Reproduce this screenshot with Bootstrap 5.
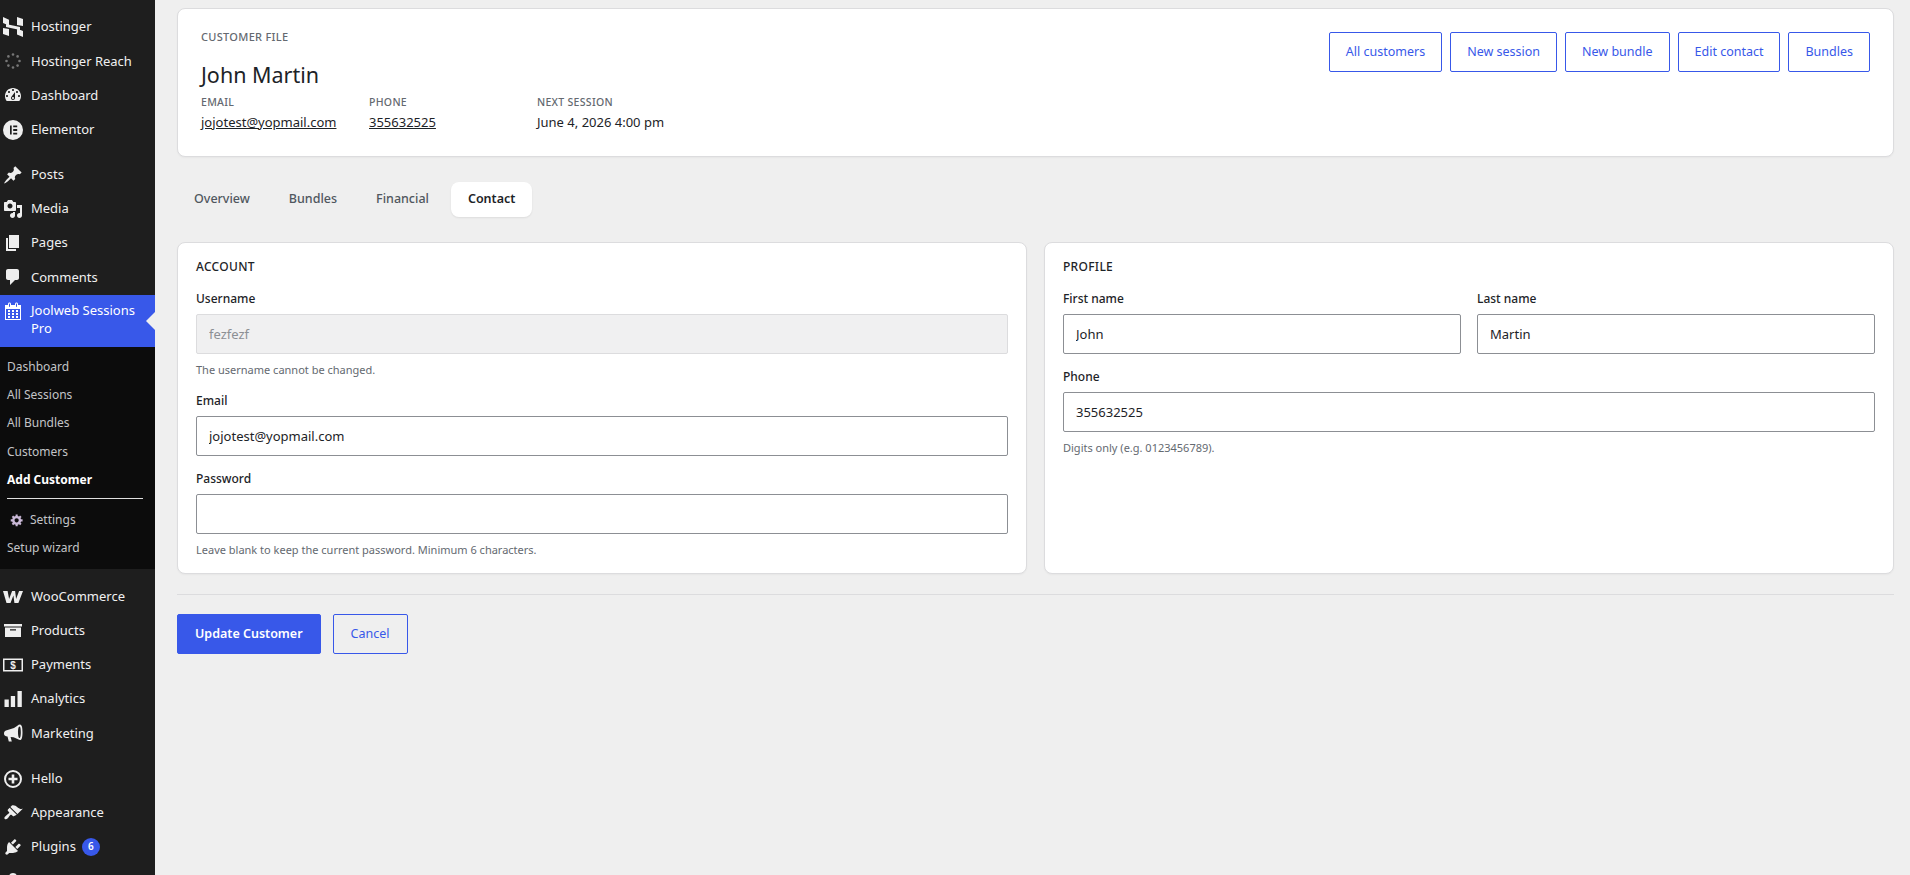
<!DOCTYPE html>
<html lang="en">
<head>
<meta charset="utf-8">
<title>Customer file</title>
<link href="https://cdn.jsdelivr.net/npm/bootstrap@5.3.0/dist/css/bootstrap.min.css" rel="stylesheet">
<style>
html,body{height:100%;overflow:hidden}
body{background:#efefef;font-family:"Noto Sans","Open Sans",sans-serif;font-size:13px;color:#1d2327}
.shell{height:100vh;overflow:hidden}
.wp-side{width:155px;flex:0 0 155px;background:#1e1e1e;padding-top:10px;color:#f0f0f1;overflow:hidden}
.wp-item{height:34.2px;display:flex;align-items:center;padding-left:3px;font-size:13px;color:#f0f0f1;text-decoration:none;white-space:nowrap}
.wp-item svg{width:20px;height:20px;flex:0 0 20px;margin-right:8px;fill:#eee}
.wp-sep{height:11px}
.wp-active{position:relative;background:#3858e9;color:#fff;height:52px;display:flex;align-items:flex-start;padding:6px 0 0 3px;line-height:18px;font-size:13px}
.wp-active svg{width:20px;height:20px;flex:0 0 20px;margin-right:8px;fill:#fff;margin-top:0}
.wp-active::after{content:"";position:absolute;right:0;top:17px;border:9px solid transparent;border-right-color:#efefef;border-left:0}
.wp-sub{height:222px;background:#0c0c0c;padding-top:6.5px}
.wp-sub a{display:flex;align-items:center;height:28.2px;padding-left:7px;color:#c3c4c7;font-size:12px;text-decoration:none;white-space:nowrap}
.wp-sub a.wp-cur{color:#fff;font-weight:700}
.wp-sub .wp-rule{height:1px;background:#e0e0e0;margin:4px 12px 7px 7px}
.wp-gear{width:14px;height:14px;margin:0 6px 0 3px;fill:#c9b8d6}
.wp-count{display:inline-flex;align-items:center;justify-content:center;width:18px;height:18px;border-radius:50%;background:#3858e9;color:#fff;font-size:10px;font-weight:600;margin-left:6px}
.page-main{flex:1 1 auto;min-width:0;padding:8px 16px 0 22px}
.box{border:1px solid #dcdcde;border-radius:8px;background:#fff;box-shadow:0 1px 2px rgba(0,0,0,.04)}
.head-box{height:149px;padding:19px 23px}
.eyebrow{font-size:11px;line-height:18px;letter-spacing:.3px;color:#646970;font-weight:500;text-transform:uppercase}
.cust-name{font-size:21.5px;line-height:32px;margin:13px 0 3px;color:#1d2327;font-weight:400}
.stat-grid{display:grid;grid-template-columns:168px 168px 168px}
.stat-lab{font-size:10.5px;line-height:16px;letter-spacing:.3px;color:#646970;font-weight:500;text-transform:uppercase;margin-bottom:2px}
.stat-val{font-size:13px;line-height:20px;color:#1d2327}
.stat-val a{color:#1d2327}
.act-btn{height:40px;padding:0 16px;border-radius:2px;font-size:12.5px;display:inline-flex;align-items:center;--bs-btn-color:#3858e9;--bs-btn-border-color:#3858e9;--bs-btn-hover-bg:#3858e9;--bs-btn-hover-border-color:#3858e9;--bs-btn-active-bg:#3858e9;--bs-btn-active-border-color:#3858e9;background:#fff}
.tabs-row{margin:25px 0;gap:5px}
.tab-lnk{height:35px;display:flex;align-items:center;padding:0 17px;font-size:12.5px;font-weight:500;color:#50575e;border-radius:8px;text-decoration:none}
.tab-lnk.tab-on{background:#fff;color:#1d2327;font-weight:600;box-shadow:0 1px 2px rgba(0,0,0,.08)}
.pane-row{--bs-gutter-x:17px;--bs-gutter-y:0}
.pane{height:332px;padding:15px 18px 15px 18px}
.pane-title{font-size:12px;line-height:18px;letter-spacing:.3px;font-weight:500;text-transform:uppercase;margin-bottom:14px;color:#1d2327}
.fld{margin-bottom:14px}
.fld label{display:block;font-size:12px;line-height:18px;font-weight:500;margin-bottom:6px;color:#1d2327}
.fld .form-control{height:40px;border:1px solid #8c8f94;border-radius:2px;padding:0 12px;font-size:13px;color:#1d2327;background:#fff}
.fld .form-control:disabled{background:#f0f0f1;border-color:#dcdcde;color:#8c8f94}
.fld-help{font-size:11px;line-height:16px;margin-top:8px;color:#646970}
.pane-gap{--bs-gutter-x:16px}
.sep-line{height:1px;background:#dcdcde;margin:20px 0 19px}
.btn-save,.btn-cancel{height:40px;display:inline-flex;align-items:center;border-radius:2px;font-size:12.5px;padding:0 17px}
.btn-save{--bs-btn-bg:#3858e9;--bs-btn-border-color:#3858e9;--bs-btn-color:#fff;--bs-btn-hover-bg:#3858e9;--bs-btn-hover-color:#fff;font-weight:600}
.btn-cancel{--bs-btn-color:#3858e9;--bs-btn-border-color:#3858e9;--bs-btn-hover-bg:#3858e9}
</style>
</head>
<body>
<div class="shell d-flex">
<nav class="wp-side">
<a class="wp-item" href="#"><svg viewBox="0 0 20 20"><path d="M0 0l6 2.7v5.8L0 6zM14 0l6 2v7l-6-1zM0 11l6 1v7l-6-2zM14 11.5l6 2.5v6l-6-2.5zM3 7l14 3v3L3 10z"/></svg>Hostinger</a>
<a class="wp-item" href="#"><svg viewBox="0 0 20 20"><g fill="#777"><circle cx="10" cy="3.5" r="1.3"/><circle cx="14.6" cy="5.4" r="1.3"/><circle cx="16.5" cy="10" r="1.3"/><circle cx="14.6" cy="14.6" r="1.3"/><circle cx="10" cy="16.5" r="1.3"/><circle cx="5.4" cy="14.6" r="1.3"/><circle cx="3.5" cy="10" r="1.3"/><circle cx="5.4" cy="5.4" r="1.3"/></g></svg>Hostinger Reach</a>
<a class="wp-item" href="#"><svg viewBox="0 0 20 20"><path d="M3.76 16h12.48c1.1-1.37 1.76-3.11 1.76-5 0-4.42-3.58-8-8-8s-8 3.58-8 8c0 1.89.66 3.63 1.76 5zM10 4c.55 0 1 .45 1 1s-.45 1-1 1-1-.45-1-1 .45-1 1-1zM6 6c.55 0 1 .45 1 1s-.45 1-1 1-1-.45-1-1 .45-1 1-1zm8 0c.55 0 1 .45 1 1s-.45 1-1 1-1-.45-1-1 .45-1 1-1zm-5.37 5.55L12 7v6c0 1.1-.9 2-2 2s-2-.9-2-2c0-.57.24-1.08.63-1.45zM4 10c.55 0 1 .45 1 1s-.45 1-1 1-1-.45-1-1 .45-1 1-1zm12 0c.55 0 1 .45 1 1s-.45 1-1 1-1-.45-1-1 .45-1 1-1zm-5 3c0-.55-.45-1-1-1s-1 .45-1 1 .45 1 1 1 1-.45 1-1z"/></svg>Dashboard</a>
<a class="wp-item" href="#"><svg viewBox="0 0 20 20"><path fill-rule="evenodd" d="M10 0a10 10 0 100 20 10 10 0 000-20zM7 5.5h1.7v9H7zM10.2 5.5h4v1.7h-4zM10.2 9.1h4v1.8h-4zM10.2 12.8h4v1.7h-4z"/></svg>Elementor</a>
<div class="wp-sep"></div>
<a class="wp-item" href="#"><svg viewBox="0 0 20 20"><path d="M10.44 3.02l1.82-1.82 6.36 6.35-1.83 1.82c-1.05-.68-2.48-.57-3.41.36l-.75.75c-.92.93-1.04 2.35-.35 3.41l-1.83 1.82-2.41-2.41-2.8 2.79c-.42.42-3.38 2.71-3.8 2.29s1.86-3.39 2.28-3.81l2.79-2.79L4.1 9.36l1.83-1.82c1.05.69 2.48.57 3.4-.36l.75-.75c.93-.92 1.05-2.35.36-3.41z"/></svg>Posts</a>
<a class="wp-item" href="#"><svg viewBox="0 0 20 20"><path d="M13 11V4c0-.55-.45-1-1-1h-1.67L9 1H5L3.67 3H2c-.55 0-1 .45-1 1v7c0 .55.45 1 1 1h10c.55 0 1-.45 1-1zM7 4.5c1.38 0 2.5 1.12 2.5 2.5S8.38 9.5 7 9.5 4.5 8.38 4.5 7 5.62 4.5 7 4.5zM14 6h5v10.5c0 1.38-1.12 2.5-2.5 2.5S14 17.88 14 16.5s1.12-2.5 2.5-2.5c.17 0 .34.02.5.05V9h-3V6zm-4 8.05V13h2v3.5c0 1.38-1.12 2.5-2.5 2.5S7 17.88 7 16.5 8.12 14 9.5 14c.17 0 .34.02.5.05z"/></svg>Media</a>
<a class="wp-item" href="#"><svg viewBox="0 0 20 20"><path d="M6 15V2h10v13H6zm-1 1h8v2H3V5h2v11z"/></svg>Pages</a>
<a class="wp-item" href="#"><svg viewBox="0 0 20 20"><path d="M5 2h9c1.1 0 2 .9 2 2v7c0 1.1-.9 2-2 2h-2l-5 5v-5H5c-1.1 0-2-.9-2-2V4c0-1.1.9-2 2-2z"/></svg>Comments</a>
<div class="wp-active"><svg viewBox="0 0 20 20"><path d="M15 4h3v15H2V4h3V3c0-.41.15-.76.44-1.06.29-.29.65-.44 1.06-.44s.77.15 1.06.44c.29.3.44.65.44 1.06v1h4V3c0-.41.15-.76.44-1.06.29-.29.65-.44 1.06-.44s.77.15 1.06.44c.29.3.44.65.44 1.06v1zM6 3v2.5c0 .14.05.26.15.36.09.09.21.14.35.14s.26-.05.35-.14c.1-.1.15-.22.15-.36V3c0-.14-.05-.26-.15-.35-.09-.1-.21-.15-.35-.15s-.26.05-.35.15c-.1.09-.15.21-.15.35zm7 0v2.5c0 .14.05.26.14.36.1.09.22.14.36.14s.26-.05.36-.14c.09-.1.14-.22.14-.36V3c0-.14-.05-.26-.14-.35-.1-.1-.22-.15-.36-.15s-.26.05-.36.15c-.09.09-.14.21-.14.35zm4 15V8H3v10h14zM7 9v2H5V9h2zm2 0h2v2H9V9zm4 2V9h2v2h-2zm-6 1v2H5v-2h2zm2 0h2v2H9v-2zm4 2v-2h2v2h-2zm-6 1v2H5v-2h2zm4 2H9v-2h2v2zm4 0h-2v-2h2v2z"/></svg><span>Joolweb Sessions<br>Pro</span></div>
<div class="wp-sub">
<a href="#">Dashboard</a><a href="#">All Sessions</a><a href="#">All Bundles</a><a href="#">Customers</a><a href="#" class="wp-cur">Add Customer</a>
<div class="wp-rule"></div>
<a href="#"><svg class="wp-gear" viewBox="0 0 20 20"><path d="M18 12h-2.18c-.17.7-.44 1.35-.81 1.93l1.54 1.54-2.1 2.1-1.54-1.54c-.58.36-1.23.63-1.91.79V19H8v-2.18c-.68-.16-1.33-.43-1.91-.79l-1.54 1.54-2.12-2.12 1.54-1.54c-.36-.58-.63-1.23-.79-1.91H1V9.03h2.17c.16-.7.44-1.35.8-1.94L2.43 5.55l2.1-2.1 1.54 1.54c.58-.37 1.24-.64 1.93-.81V2h3v2.18c.68.16 1.33.43 1.91.79l1.54-1.54 2.12 2.12-1.54 1.54c.36.59.64 1.24.8 1.94H18V12zm-8.5 1.5c1.66 0 3-1.34 3-3s-1.34-3-3-3-3 1.34-3 3 1.34 3 3 3z"/></svg>Settings</a>
<a href="#">Setup wizard</a>
</div>
<div class="wp-sep"></div>
<a class="wp-item" href="#"><svg viewBox="0 0 20 20"><path d="M0 4h4.6l1.5 8 3-8h3l1 8 3-8H20l-4.6 12h-4l-1-7.5L7.5 16h-4z"/></svg>WooCommerce</a>
<a class="wp-item" href="#"><svg viewBox="0 0 20 20"><path fill-rule="evenodd" d="M1 3h18v2.5H1zM2 6.5h16V16H2zM7 8.2v1.4h6V8.2z"/></svg>Products</a>
<a class="wp-item" href="#"><svg viewBox="0 0 20 20"><path fill-rule="evenodd" d="M0 3.5h20v13H0zM1.5 5v10h17V5z"/><text x="10" y="14" text-anchor="middle" font-size="10" font-weight="700" font-family="Liberation Sans">$</text></svg>Payments</a>
<a class="wp-item" href="#"><svg viewBox="0 0 20 20"><path d="M1.5 10.5h4.3V18H1.5zM7.8 7h4.3v11H7.800zM14.500 2h4.300v16h-4.300z"/></svg>Analytics</a>
<a class="wp-item" href="#"><svg viewBox="0 0 20 20"><path fill-rule="evenodd" d="M17 1.500c-2 0-3 2-6 3.500L3 7.500c-1.500.5-2 1.500-2 3s.7 2.300 2 2.700l1.500.3 1.300 5h3L7.600 14l2.900.3c2.500.5 4.500 2.700 6.500 2.700 2 0 2.500-3.800 2.500-7.800s-.5-7.700-2.500-7.700zm-.5 2c1 0 1.300 3 1.300 5.700s-.3 5.800-1.300 5.800-1.500-3-1.500-5.800.5-5.700 1.500-5.700z"/></svg>Marketing</a>
<div class="wp-sep"></div>
<a class="wp-item" href="#"><svg viewBox="0 0 20 20"><path fill-rule="evenodd" d="M10 1a9 9 0 100 18 9 9 0 000-18zm0 2a7 7 0 110 14 7 7 0 010-14zM8.700 5.500h2.600v3.200h3.200v2.600h-3.200v3.200H8.700v-3.200H5.500V8.700h3.200z"/></svg>Hello</a>
<a class="wp-item" href="#"><svg viewBox="0 0 20 20"><path d="M14.480 11.060L7.410 3.990l1.500-1.500c.5-.56 2.300-.47 3.510.32 1.210.8 1.430 1.280 2.910 2.100 1.180.64 2.450 1.260 4.450.85zm-.71.71L6.700 4.700 4.930 6.470c-.39.39-.39 1.020 0 1.410l1.060 1.060c.39.39.39 1.030 0 1.420-.6.6-1.430 1.110-2.210 1.690-.35.26-.7.53-1.010.84C1.430 13.710.96 15.120 1.750 15.900c.78.78 2.190.31 3.010-.68.31-.31.58-.66.84-1.010.58-.78 1.090-1.610 1.690-2.210.39-.39 1.030-.39 1.420 0l1.060 1.060c.39.39 1.020.39 1.410 0z"/></svg>Appearance</a>
<a class="wp-item" href="#"><svg viewBox="0 0 20 20"><path d="M13.110 4.360L9.870 7.600 8 5.730l3.240-3.240c.35-.34 1.050-.2 1.560.32.52.51.66 1.210.31 1.550zm-8 1.770l.91-1.120 9.010 9.010-1.190.84c-.71.71-2.630 1.160-3.820 1.160H6.140L4.900 17.260c-.59.59-1.540.59-2.120 0-.59-.58-.59-1.530 0-2.120l1.240-1.240v-3.880c0-1.130.4-3.190 1.090-3.890zm7.260 3.970l3.240-3.240c.34-.35 1.040-.21 1.550.31.52.51.66 1.210.31 1.550l-3.240 3.250z"/></svg>Plugins<span class="wp-count">6</span></a>
<a class="wp-item" href="#"><svg viewBox="0 0 20 20"><circle cx="10" cy="6" r="4"/><path d="M3 18c0-5 3-7 7-7s7 2 7 7z"/></svg></a>
</nav>
<main class="page-main">
<section class="box head-box d-flex justify-content-between align-items-start">
<div>
<div class="eyebrow">Customer file</div>
<h1 class="cust-name">John Martin</h1>
<div class="stat-grid">
<div><div class="stat-lab">Email</div><div class="stat-val"><a href="#">jojotest@yopmail.com</a></div></div>
<div><div class="stat-lab">Phone</div><div class="stat-val"><a href="#">355632525</a></div></div>
<div><div class="stat-lab">Next session</div><div class="stat-val">June 4, 2026 4:00 pm</div></div>
</div>
</div>
<div class="d-flex gap-2 mt-1">
<a class="btn btn-outline-primary act-btn" href="#">All customers</a>
<a class="btn btn-outline-primary act-btn" href="#">New session</a>
<a class="btn btn-outline-primary act-btn" href="#">New bundle</a>
<a class="btn btn-outline-primary act-btn" href="#">Edit contact</a>
<a class="btn btn-outline-primary act-btn" href="#">Bundles</a>
</div>
</section>
<div class="d-flex tabs-row">
<a class="tab-lnk" href="#">Overview</a>
<a class="tab-lnk" href="#">Bundles</a>
<a class="tab-lnk" href="#">Financial</a>
<a class="tab-lnk tab-on" href="#">Contact</a>
</div>
<div class="row pane-row">
<div class="col-6">
<section class="box pane">
<div class="pane-title">Account</div>
<div class="fld"><label for="u">Username</label><input id="u" class="form-control" value="fezfezf" disabled><div class="fld-help">The username cannot be changed.</div></div>
<div class="fld"><label for="e">Email</label><input id="e" class="form-control" value="jojotest@yopmail.com"></div>
<div class="fld"><label for="p">Password</label><input id="p" class="form-control" type="password"><div class="fld-help">Leave blank to keep the current password. Minimum 6 characters.</div></div>
</section>
</div>
<div class="col-6">
<section class="box pane">
<div class="pane-title">Profile</div>
<div class="row pane-gap">
<div class="col-6 fld"><label for="f">First name</label><input id="f" class="form-control" value="John"></div>
<div class="col-6 fld"><label for="l">Last name</label><input id="l" class="form-control" value="Martin"></div>
</div>
<div class="fld"><label for="ph">Phone</label><input id="ph" class="form-control" value="355632525"><div class="fld-help">Digits only (e.g. 0123456789).</div></div>
</section>
</div>
</div>
<div class="sep-line"></div>
<div class="d-flex pane-actions gap-2">
<button class="btn btn-primary btn-save" type="button">Update Customer</button>
<button class="btn btn-outline-primary btn-cancel ms-1" type="button">Cancel</button>
</div>
</main>
</div>
<script src="https://cdn.jsdelivr.net/npm/bootstrap@5.3.0/dist/js/bootstrap.bundle.min.js"></script>
</body>
</html>
